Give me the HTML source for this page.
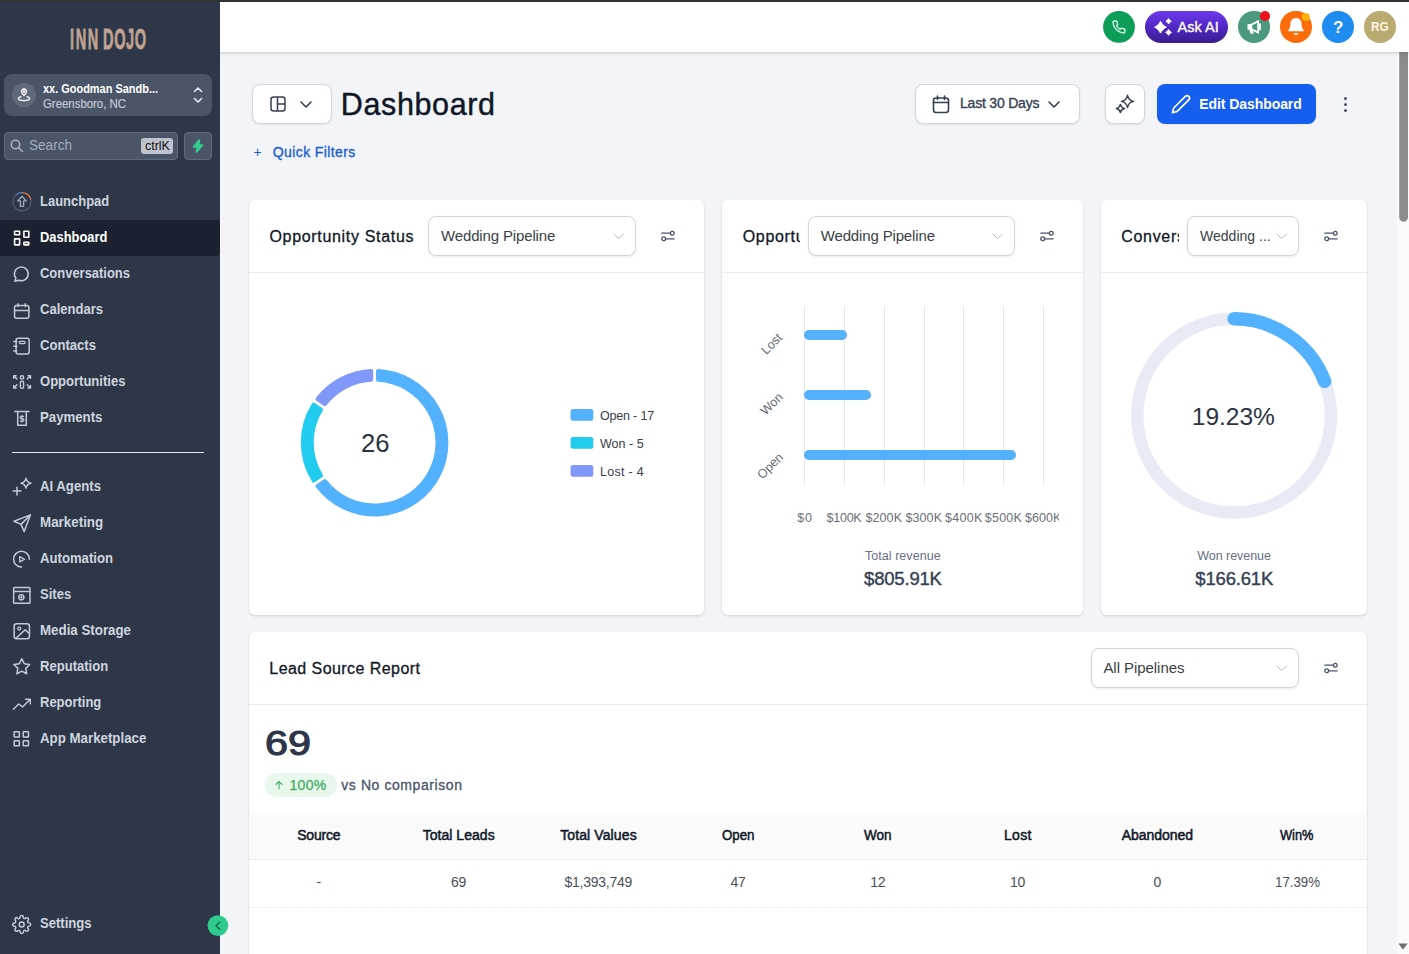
<!DOCTYPE html>
<html lang="en"><head><meta charset="utf-8"><title>Dashboard</title>
<style>
html,body{margin:0;padding:0;width:1409px;height:954px;overflow:hidden}
body{width:1409px;height:954px;overflow:hidden;position:relative;background:#f2f4f7;font-family:"Liberation Sans",sans-serif;}
.b{position:absolute;box-sizing:border-box;display:block}
.t{position:absolute;white-space:pre;margin:0;padding:0}
.card{position:absolute;box-sizing:border-box;background:#fff;border-radius:6px;box-shadow:0 1px 3px rgba(16,24,40,.10),0 1px 2px rgba(16,24,40,.06)}
.sel{position:absolute;box-sizing:border-box;background:#fff;border:1px solid #d2d5da;border-radius:8px;box-shadow:0 1px 2px rgba(16,24,40,.09)}
</style></head><body>
<div id="app" style="position:absolute;left:0;top:0;width:1409px;height:954px;overflow:hidden">
<div class="sel" style="left:252px;top:84px;width:80px;height:40px"></div>
<svg class="b" style="left:270px;top:96px;" width="16" height="16" viewBox="0 0 16 16"><g fill="none" stroke="#344054" stroke-width="1.5" stroke-linejoin="round"><rect x="1" y="1" width="14" height="14" rx="2.500"/><path d="M7.500 1v14M7.500 8h7.500"/></g></svg>
<svg class="b" style="left:300.0px;top:100.5px;" width="12" height="7.0" viewBox="0 0 12 7.0"><path d="M1 1l5.0 5.0l5.0 -5.0" fill="none" stroke="#344054" stroke-width="1.6" stroke-linecap="round" stroke-linejoin="round"/></svg>
<div class="t" style="left:340.80px;top:86px;font-size:30.5px;line-height:37px;color:#101828;letter-spacing:0.623px;-webkit-text-stroke:0.45px #101828;">Dashboard</div>
<div class="t" style="left:253.50px;top:144px;font-size:14px;line-height:17px;color:#175cd3;">+</div>
<div class="t" style="left:272.80px;top:144px;font-size:14px;line-height:17px;color:#175cd3;letter-spacing:0.393px;-webkit-text-stroke:0.3px #175cd3;">Quick Filters</div>
<div class="sel" style="left:915px;top:84px;width:165px;height:40px"></div>
<svg class="b" style="left:931px;top:94px;" width="20" height="20" viewBox="0 0 20 20"><g fill="none" stroke="#344054" stroke-width="1.6" stroke-linecap="round" stroke-linejoin="round"><rect x="2.500" y="4" width="15" height="14.500" rx="2.500"/><path d="M2.500 8.500h15M6.500 2v3.500M13.500 2v3.500"/></g></svg>
<div class="t" style="left:960.00px;top:95px;font-size:14px;line-height:17px;color:#344054;letter-spacing:-0.201px;-webkit-text-stroke:0.35px #344054;">Last 30 Days</div>
<svg class="b" style="left:1048.0px;top:100.5px;" width="12" height="7.0" viewBox="0 0 12 7.0"><path d="M1 1l5.0 5.0l5.0 -5.0" fill="none" stroke="#344054" stroke-width="1.6" stroke-linecap="round" stroke-linejoin="round"/></svg>
<div class="sel" style="left:1105px;top:84px;width:40px;height:40px"></div>
<svg class="b" style="left:1115px;top:94px;overflow:visible;" width="20" height="20" viewBox="0 0 20 20"><g fill="none" stroke="#344054" stroke-width="1.450" stroke-linejoin="round"><path d="M12.5 1.30C13.27 5.20 14.70 6.63 18.60 7.4C14.70 8.17 13.27 9.60 12.5 13.50C11.73 9.60 10.30 8.17 6.40 7.4C10.30 6.63 11.73 5.20 12.5 1.30Z"/><path d="M5.4 10.40C5.92 13.02 6.88 13.98 9.50 14.5C6.88 15.02 5.92 15.98 5.4 18.60C4.88 15.98 3.92 15.02 1.30 14.5C3.92 13.98 4.88 13.02 5.4 10.40Z"/></g></svg>
<div class="b" style="left:1157px;top:84px;width:159px;height:40px;background:#155eef;border-radius:8px;box-shadow:0 1px 2px rgba(16,24,40,.05);"></div>
<svg class="b" style="left:1171px;top:94px;overflow:visible;" width="20" height="20" viewBox="0 0 20 20"><g transform="translate(-0.300 -0.200) scale(0.86)"><path d="M17 3a2.828 2.828 0 1 1 4 4L7.500 20.500 2 22l1.500-5.500L17 3z" fill="none" stroke="#fff" stroke-width="1.950" stroke-linejoin="round"/></g></svg>
<div class="t" style="left:1199.20px;top:96px;font-size:14px;line-height:17px;color:#fff;font-weight:700;letter-spacing:-0.066px;">Edit Dashboard</div>
<div class="b" style="left:1344.3px;top:97.1px;width:3px;height:3px;background:#475467;border-radius:50%;"></div>
<div class="b" style="left:1344.3px;top:102.8px;width:3px;height:3px;background:#475467;border-radius:50%;"></div>
<div class="b" style="left:1344.3px;top:108.5px;width:3px;height:3px;background:#475467;border-radius:50%;"></div>
<div class="card" style="left:249px;top:200px;width:455px;height:415px;"></div>
<div class="b" style="left:249px;top:272px;width:455px;height:1px;background:#eaecf0;"></div>
<div class="t" style="left:269.50px;top:227px;font-size:16px;line-height:19px;color:#101828;letter-spacing:0.675px;-webkit-text-stroke:0.3px #101828;">Opportunity Status</div>
<div class="sel" style="left:428px;top:216px;width:208px;height:40px"></div>
<div class="t" style="left:441.00px;top:227px;font-size:15px;line-height:18px;color:#3a3f47;letter-spacing:-0.145px;">Wedding Pipeline</div>
<svg class="b" style="left:612.8px;top:232.95000000000002px;" width="11.4" height="6.7" viewBox="0 0 11.4 6.7"><path d="M1 1l4.7 4.7l4.7 -4.7" fill="none" stroke="#b4b9c2" stroke-width="1.0" stroke-linecap="round" stroke-linejoin="round"/></svg>
<svg class="b" style="left:660px;top:228.3px;" width="16" height="16" viewBox="0 0 16 16"><g fill="none" stroke="#475467" stroke-width="1.3" stroke-linecap="round"><path d="M1.800 5.200h8.400M5.800 10.800h8.400"/><circle cx="12.300" cy="5.200" r="1.900"/><circle cx="3.700" cy="10.800" r="1.900"/></g></svg>
<svg class="b" style="left:0;top:0" width="1409" height="954" viewBox="0 0 1409 954"><path d="M378.00 370.88A71.80 71.80 0 1 1 317.51 486.14L324.84 481.08A62.90 62.90 0 1 0 378.00 379.79Z" fill="#53b1fd" stroke="#53b1fd" stroke-width="4.0" stroke-linejoin="round"/><path d="M313.65 480.54A71.80 71.80 0 0 1 313.65 404.66L320.98 409.72A62.90 62.90 0 0 0 320.98 475.48Z" fill="#22ccee" stroke="#22ccee" stroke-width="4.0" stroke-linejoin="round"/><path d="M317.51 399.06A71.80 71.80 0 0 1 371.20 370.88L371.20 379.79A62.90 62.90 0 0 0 324.84 404.12Z" fill="#8098f9" stroke="#8098f9" stroke-width="4.0" stroke-linejoin="round"/></svg>
<div class="t" style="left:360.65px;top:427px;font-size:26.5px;line-height:32px;color:#2b3442;transform:scaleX(0.9669);transform-origin:0 50%;">26</div>
<svg class="b" style="left:570px;top:408px;" width="24" height="14" viewBox="0 0 24 14"><rect x="0.600" y="1.100" width="22.700" height="11.700" rx="2.500" fill="#53b1fd"/></svg>
<div class="t" style="left:600.00px;top:409px;font-size:12.5px;line-height:15px;color:#3a404c;letter-spacing:-0.186px;">Open - 17</div>
<svg class="b" style="left:570px;top:436px;" width="24" height="14" viewBox="0 0 24 14"><rect x="0.600" y="1.100" width="22.700" height="11.700" rx="2.500" fill="#22ccee"/></svg>
<div class="t" style="left:600.00px;top:437px;font-size:12.5px;line-height:15px;color:#3a404c;letter-spacing:0.044px;">Won - 5</div>
<svg class="b" style="left:570px;top:464px;" width="24" height="14" viewBox="0 0 24 14"><rect x="0.600" y="1.100" width="22.700" height="11.700" rx="2.500" fill="#8098f9"/></svg>
<div class="t" style="left:600.00px;top:465px;font-size:12.5px;line-height:15px;color:#3a404c;letter-spacing:0.302px;">Lost - 4</div>
<div class="card" style="left:722px;top:200px;width:361px;height:415px;"></div>
<div class="b" style="left:722px;top:272px;width:361px;height:1px;background:#eaecf0;"></div>
<div class="t" style="left:742.7px;top:226px;width:57.5px;overflow:hidden;font-size:16px;line-height:22px;color:#101828;letter-spacing:0.68px;-webkit-text-stroke:0.3px #101828">Opportunity Value</div>
<div class="sel" style="left:808px;top:216px;width:207px;height:40px"></div>
<div class="t" style="left:820.70px;top:227px;font-size:15px;line-height:18px;color:#3a3f47;letter-spacing:-0.145px;">Wedding Pipeline</div>
<svg class="b" style="left:991.8px;top:232.95000000000002px;" width="11.4" height="6.7" viewBox="0 0 11.4 6.7"><path d="M1 1l4.7 4.7l4.7 -4.7" fill="none" stroke="#b4b9c2" stroke-width="1.0" stroke-linecap="round" stroke-linejoin="round"/></svg>
<svg class="b" style="left:1039px;top:228.3px;" width="16" height="16" viewBox="0 0 16 16"><g fill="none" stroke="#475467" stroke-width="1.3" stroke-linecap="round"><path d="M1.800 5.200h8.400M5.800 10.800h8.400"/><circle cx="12.300" cy="5.200" r="1.900"/><circle cx="3.700" cy="10.800" r="1.900"/></g></svg>
<div class="b" style="left:804px;top:306px;width:1px;height:178px;background:#e5e6e9;"></div>
<div class="b" style="left:844px;top:306px;width:1px;height:178px;background:#e5e6e9;"></div>
<div class="b" style="left:884px;top:306px;width:1px;height:178px;background:#e5e6e9;"></div>
<div class="b" style="left:924px;top:306px;width:1px;height:178px;background:#e5e6e9;"></div>
<div class="b" style="left:963px;top:306px;width:1px;height:178px;background:#e5e6e9;"></div>
<div class="b" style="left:1003px;top:306px;width:1px;height:178px;background:#e5e6e9;"></div>
<div class="b" style="left:1043px;top:306px;width:1px;height:178px;background:#e5e6e9;"></div>
<div class="b" style="left:804.3px;top:330.2px;width:42.40000000000009px;height:10px;background:#53b1fd;border-radius:5px;"></div>
<div class="b" style="left:804.3px;top:390px;width:66.70000000000005px;height:10px;background:#53b1fd;border-radius:5px;"></div>
<div class="b" style="left:804.3px;top:449.9px;width:212.0px;height:10px;background:#53b1fd;border-radius:5px;"></div>
<div class="t" style="left:759.7px;top:337px;font-size:12.5px;line-height:14px;color:#666c76;transform:rotate(-45deg);transform-origin:50% 50%">Lost</div>
<div class="t" style="left:758.8px;top:397px;font-size:12.5px;line-height:14px;color:#666c76;transform:rotate(-45deg);transform-origin:50% 50%">Won</div>
<div class="t" style="left:755.2px;top:459px;font-size:12.5px;line-height:14px;color:#666c76;transform:rotate(-45deg);transform-origin:50% 50%">Open</div>
<div class="t" style="left:797.20px;top:511px;font-size:12.5px;line-height:15px;color:#6a6f79;letter-spacing:0.796px;">$0</div>
<div class="t" style="left:826.50px;top:511px;font-size:12.5px;line-height:15px;color:#6a6f79;letter-spacing:-0.237px;">$100K</div>
<div class="t" style="left:865.50px;top:511px;font-size:12.5px;line-height:15px;color:#6a6f79;letter-spacing:0.088px;">$200K</div>
<div class="t" style="left:905.40px;top:511px;font-size:12.5px;line-height:15px;color:#6a6f79;letter-spacing:0.113px;">$300K</div>
<div class="t" style="left:945.00px;top:511px;font-size:12.5px;line-height:15px;color:#6a6f79;letter-spacing:0.288px;">$400K</div>
<div class="t" style="left:984.80px;top:511px;font-size:12.5px;line-height:15px;color:#6a6f79;letter-spacing:0.238px;">$500K</div>
<div class="t" style="left:1025px;top:511px;width:34px;overflow:hidden;font-size:12.5px;line-height:15px;color:#6a6f79;letter-spacing:0.05px">$600K</div>
<div class="t" style="left:865.00px;top:549px;font-size:12.5px;line-height:15px;color:#667085;letter-spacing:0.046px;">Total revenue</div>
<div class="t" style="left:864.10px;top:568px;font-size:18.5px;line-height:22px;color:#344054;letter-spacing:-0.202px;-webkit-text-stroke:0.4px #344054;">$805.91K</div>
<div class="card" style="left:1101px;top:200px;width:266px;height:415px;"></div>
<div class="b" style="left:1101px;top:272px;width:266px;height:1px;background:#eaecf0;"></div>
<div class="t" style="left:1121.3px;top:226px;width:57.5px;overflow:hidden;font-size:16px;line-height:22px;color:#101828;letter-spacing:0.68px;-webkit-text-stroke:0.3px #101828">Conversion Rate</div>
<div class="sel" style="left:1187px;top:216px;width:112px;height:40px"></div>
<div class="t" style="left:1199.70px;top:227px;font-size:15px;line-height:18px;color:#3a3f47;transform:scaleX(0.9352);transform-origin:0 50%;">Wedding ...</div>
<svg class="b" style="left:1276.0px;top:232.95000000000002px;" width="11.4" height="6.7" viewBox="0 0 11.4 6.7"><path d="M1 1l4.7 4.7l4.7 -4.7" fill="none" stroke="#b4b9c2" stroke-width="1.0" stroke-linecap="round" stroke-linejoin="round"/></svg>
<svg class="b" style="left:1323px;top:228.3px;" width="16" height="16" viewBox="0 0 16 16"><g fill="none" stroke="#475467" stroke-width="1.3" stroke-linecap="round"><path d="M1.800 5.200h8.400M5.800 10.800h8.400"/><circle cx="12.300" cy="5.200" r="1.900"/><circle cx="3.700" cy="10.800" r="1.900"/></g></svg>
<svg class="b" style="left:0;top:0" width="1409" height="954" viewBox="0 0 1409 954"><circle cx="1234.1" cy="415.7" r="96.85" fill="none" stroke="#e8ebf5" stroke-width="12.5"/><path d="M1234.1 318.85A96.85 96.85 0 0 1 1324.65 381.35" fill="none" stroke="#53b1fd" stroke-width="13.5" stroke-linecap="round"/></svg>
<div class="t" style="left:1191.80px;top:402px;font-size:24.5px;line-height:29px;color:#2b3442;letter-spacing:-0.019px;">19.23%</div>
<div class="t" style="left:1197.30px;top:549px;font-size:12.5px;line-height:15px;color:#667085;letter-spacing:-0.052px;">Won revenue</div>
<div class="t" style="left:1195.35px;top:568px;font-size:18.5px;line-height:22px;color:#344054;letter-spacing:-0.188px;-webkit-text-stroke:0.4px #344054;">$166.61K</div>
<div class="card" style="left:249px;top:632px;width:1118px;height:322px;border-radius:6px 6px 0 0;"></div>
<div class="b" style="left:249px;top:704px;width:1118px;height:1px;background:#eaecf0;"></div>
<div class="t" style="left:269.30px;top:659px;font-size:16px;line-height:19px;color:#101828;letter-spacing:0.441px;-webkit-text-stroke:0.3px #101828;">Lead Source Report</div>
<div class="sel" style="left:1091px;top:648px;width:208px;height:40px"></div>
<div class="t" style="left:1103.40px;top:659px;font-size:15px;line-height:18px;color:#3a3f47;letter-spacing:-0.051px;">All Pipelines</div>
<svg class="b" style="left:1275.8px;top:664.9499999999999px;" width="11.4" height="6.7" viewBox="0 0 11.4 6.7"><path d="M1 1l4.7 4.7l4.7 -4.7" fill="none" stroke="#b4b9c2" stroke-width="1.0" stroke-linecap="round" stroke-linejoin="round"/></svg>
<svg class="b" style="left:1323px;top:660px;" width="16" height="16" viewBox="0 0 16 16"><g fill="none" stroke="#475467" stroke-width="1.3" stroke-linecap="round"><path d="M1.800 5.200h8.400M5.800 10.800h8.400"/><circle cx="12.300" cy="5.200" r="1.900"/><circle cx="3.700" cy="10.800" r="1.900"/></g></svg>
<div class="t" style="left:265.20px;top:723px;font-size:34.5px;line-height:41px;color:#2d3648;transform:scaleX(1.1987);transform-origin:0 50%;-webkit-text-stroke:1.1px #2d3648;">69</div>
<div class="b" style="left:265px;top:773px;width:72px;height:24px;background:#e8f8ed;border-radius:12px;"></div>
<svg class="b" style="left:273px;top:779px;" width="12" height="12" viewBox="0 0 12 12"><path d="M6 10V2.500M3 5.500l3-3 3 3" fill="none" stroke="#4caf6a" stroke-width="1.1" stroke-linecap="round" stroke-linejoin="round"/></svg>
<div class="t" style="left:289.40px;top:777px;font-size:14px;line-height:17px;color:#3dab5e;letter-spacing:0.364px;-webkit-text-stroke:0.25px #3dab5e;">100%</div>
<div class="t" style="left:341.30px;top:777px;font-size:14px;line-height:17px;color:#475467;letter-spacing:0.577px;-webkit-text-stroke:0.3px #475467;">vs No comparison</div>
<div class="b" style="left:249px;top:813px;width:1118px;height:47px;background:#fafafb;border-bottom:1px solid #eeeff2;"></div>
<div class="b" style="left:249px;top:907px;width:1118px;height:1px;background:#eeeff2;"></div>
<div class="t" style="left:297.15px;top:827px;font-size:14px;line-height:17px;color:#101828;letter-spacing:-0.172px;-webkit-text-stroke:0.5px #101828;">Source</div>
<div class="t" style="left:316.57px;top:874px;font-size:14px;line-height:17px;color:#4a4f59;">-</div>
<div class="t" style="left:422.65px;top:827px;font-size:14px;line-height:17px;color:#101828;letter-spacing:0.039px;-webkit-text-stroke:0.5px #101828;">Total Leads</div>
<div class="t" style="left:450.90px;top:874px;font-size:14px;line-height:17px;color:#4a4f59;letter-spacing:-0.073px;">69</div>
<div class="t" style="left:560.15px;top:827px;font-size:14px;line-height:17px;color:#101828;letter-spacing:0.115px;-webkit-text-stroke:0.5px #101828;">Total Values</div>
<div class="t" style="left:564.40px;top:874px;font-size:14px;line-height:17px;color:#4a4f59;letter-spacing:-0.230px;">$1,393,749</div>
<div class="t" style="left:721.90px;top:827px;font-size:14px;line-height:17px;color:#101828;transform:scaleX(0.9489);transform-origin:0 50%;-webkit-text-stroke:0.5px #101828;">Open</div>
<div class="t" style="left:730.40px;top:874px;font-size:14px;line-height:17px;color:#4a4f59;letter-spacing:-0.073px;">47</div>
<div class="t" style="left:864.15px;top:827px;font-size:14px;line-height:17px;color:#101828;transform:scaleX(0.9638);transform-origin:0 50%;-webkit-text-stroke:0.5px #101828;">Won</div>
<div class="t" style="left:870.15px;top:874px;font-size:14px;line-height:17px;color:#4a4f59;letter-spacing:-0.073px;">12</div>
<div class="t" style="left:1003.90px;top:827px;font-size:14px;line-height:17px;color:#101828;letter-spacing:0.346px;-webkit-text-stroke:0.5px #101828;">Lost</div>
<div class="t" style="left:1009.90px;top:874px;font-size:14px;line-height:17px;color:#4a4f59;letter-spacing:-0.073px;">10</div>
<div class="t" style="left:1121.65px;top:827px;font-size:14px;line-height:17px;color:#101828;letter-spacing:-0.016px;-webkit-text-stroke:0.5px #101828;">Abandoned</div>
<div class="t" style="left:1153.51px;top:874px;font-size:14px;line-height:17px;color:#4a4f59;">0</div>
<div class="t" style="left:1280.40px;top:827px;font-size:14px;line-height:17px;color:#101828;transform:scaleX(0.9163);transform-origin:0 50%;-webkit-text-stroke:0.5px #101828;">Win%</div>
<div class="t" style="left:1274.65px;top:874px;font-size:14px;line-height:17px;color:#4a4f59;transform:scaleX(0.9477);transform-origin:0 50%;">17.39%</div>
<div class="b" style="left:1397px;top:52px;width:12px;height:902px;background:#fafafa;"></div>
<svg class="b" style="left:1397px;top:52px;" width="12" height="902" viewBox="0 0 12 902"><path d="M2.200 0h8.800v165.300a4.400 4.400 0 0 1-8.800 0z" fill="#8b8b8b"/><path d="M1.300 891.500h9.400L6 897.500z" fill="#6e6e6e"/></svg>
<div class="b" style="left:220px;top:0px;width:1189px;height:52px;background:#fff;box-shadow:0 1px 3px rgba(0,0,0,.12),0 2px 4px rgba(0,0,0,.06);"></div>
<div class="b" style="left:0px;top:0px;width:1409px;height:2px;background:#333;z-index:5;"></div>
<svg class="b" style="left:1103px;top:11px;" width="32" height="32" viewBox="0 0 32 32"><circle cx="16" cy="15.900" r="15.900" fill="#0d9d58"/><g transform="translate(8.700 8.800) scale(0.6)"><path d="M22 16.920v3a2 2 0 0 1-2.180 2 19.790 19.790 0 0 1-8.630-3.070 19.500 19.500 0 0 1-6-6 19.790 19.790 0 0 1-3.070-8.670A2 2 0 0 1 4.110 2h3a2 2 0 0 1 2 1.720 12.840 12.840 0 0 0 .7 2.810 2 2 0 0 1-.45 2.110L8.090 9.910a16 16 0 0 0 6 6l1.270-1.270a2 2 0 0 1 2.110-.45 12.840 12.840 0 0 0 2.810.7A2 2 0 0 1 22 16.920z" fill="none" stroke="#d4f7e4" stroke-width="2.300" stroke-linejoin="round"/></g></svg>
<div class="b" style="left:1145px;top:11px;width:83px;height:32px;background:linear-gradient(180deg,#6d3aec 0%,#5429c8 45%,#3a1b90 100%);border-radius:16px;"></div>
<svg class="b" style="left:1150px;top:14px;" width="24" height="26" viewBox="0 0 24 26"><path d="M10.5 7.299999999999999C11.53 9.78 13.92 12.17 16.4 13.2C13.92 14.23 11.53 16.62 10.5 19.1C9.47 16.62 7.08 14.23 4.6 13.2C7.08 12.17 9.47 9.78 10.5 7.299999999999999ZM18.6 4.6C19.07 5.73 20.17 6.83 21.3 7.3C20.17 7.77 19.07 8.87 18.6 10.0C18.13 8.87 17.03 7.77 15.900000000000002 7.3C17.03 6.83 18.13 5.73 18.6 4.6ZM18.6 15.499999999999998C19.10 16.72 20.28 17.90 21.5 18.4C20.28 18.90 19.10 20.08 18.6 21.299999999999997C18.10 20.08 16.92 18.90 15.700000000000001 18.4C16.92 17.90 18.10 16.72 18.6 15.499999999999998Z" fill="#fff" stroke="#fff" stroke-width="1" stroke-linejoin="round"/></svg>
<div class="t" style="left:1177.60px;top:19px;font-size:14.5px;line-height:17px;color:#fff;letter-spacing:0.020px;-webkit-text-stroke:0.35px #fff;">Ask AI</div>
<svg class="b" style="left:1238px;top:11px;" width="32" height="32" viewBox="0 0 32 32"><circle cx="16" cy="15.900" r="16" fill="#4b9a80"/><g fill="#fff"><path d="M9.500 13h3.200l8.300-4.200v14.200l-8.300-4.200H9.500z"/><path d="M11.200 18h3.600l.8 4.800h-3.200z"/></g><path d="M14.200 14.300 19.300 11.700v8.400l-5.100-2.600z" fill="#4b9a80"/><path d="M22 13.200v5.400" stroke="#fff" stroke-width="1.800" stroke-linecap="round"/></svg>
<svg class="b" style="left:1259px;top:10px;" width="12" height="12" viewBox="0 0 12 12"><circle cx="6" cy="6" r="5.100" fill="#f0101a"/></svg>
<svg class="b" style="left:1280px;top:11px;" width="32" height="32" viewBox="0 0 32 32"><circle cx="16" cy="15.900" r="16" fill="#fd6c0a"/><path d="M16 7c-3.400 0-5.600 2.500-5.600 5.700 0 3.800-1 5.500-2.300 6.700-.3.300-.1.800.3.800h15.200c.4 0 .6-.5.300-.8-1.300-1.200-2.300-2.900-2.300-6.700C21.600 9.500 19.400 7 16 7z" fill="#fff"/><path d="M13.800 22.300h4.400c-.2 1.200-1.100 2-2.200 2s-2-.8-2.200-2z" fill="#fff"/></svg>
<svg class="b" style="left:1301px;top:12px;" width="10" height="10" viewBox="0 0 10 10"><circle cx="4.800" cy="5.100" r="4" fill="#ffb20a"/></svg>
<svg class="b" style="left:1322px;top:11px;" width="32" height="32" viewBox="0 0 32 32"><circle cx="16" cy="15.900" r="16" fill="#1e8cf0"/></svg>
<div class="t" style="left:1333.11px;top:18px;font-size:17px;line-height:20px;color:#fff;font-weight:700;">?</div>
<svg class="b" style="left:1364px;top:11px;" width="32" height="32" viewBox="0 0 32 32"><circle cx="16" cy="15.900" r="16" fill="#b9aa72"/></svg>
<div class="t" style="left:1371.30px;top:19px;font-size:13.5px;line-height:16px;color:#fff6e2;font-weight:700;transform:scaleX(0.8691);transform-origin:0 50%;">RG</div>
<div class="b" style="left:0px;top:0px;width:220px;height:954px;background:#2d3748;"></div>
<div class="t" style="left:70px;top:24px;height:30px;line-height:30px;font-size:30px;font-weight:700;color:#bfa292;-webkit-text-stroke:0.8px #bfa292;transform-origin:0 50%;transform:scaleX(0.485);white-space:pre;word-spacing:-2px"><span style="letter-spacing:3.4px">INN</span> <span style="letter-spacing:1.2px">DOJO</span></div>
<div class="b" style="left:4px;top:74px;width:208px;height:42px;background:#4a5568;border-radius:8px;"></div>
<div class="b" style="left:12px;top:83px;width:24px;height:24px;background:#5f6b7d;border-radius:50%;"></div>
<svg class="b" style="left:16px;top:87px;" width="16" height="16" viewBox="0 0 16 16"><g fill="none" stroke="#fff" stroke-width="1.3" stroke-linecap="round" stroke-linejoin="round"><path d="M8 8.6c1.5-1.5 2.6-2.6 2.6-4A2.6 2.6 0 0 0 5.4 4.6c0 1.4 1.1 2.5 2.6 4z"/><circle cx="8" cy="4.6" r="0.8"/><path d="M5 9.6c-1.5.4-2.6 1.1-2.6 1.9 0 1.2 2.5 2.1 5.6 2.1s5.6-.9 5.6-2.1c0-.8-1.1-1.500-2.600-1.900"/></g></svg>
<div class="t" style="left:43.00px;top:82px;font-size:12px;line-height:14px;color:#ffffff;font-weight:700;transform:scaleX(0.9126);transform-origin:0 50%;">xx. Goodman Sandb...</div>
<div class="t" style="left:43.00px;top:97px;font-size:12px;line-height:14px;color:#c0c7d2;transform:scaleX(0.9500);transform-origin:0 50%;-webkit-text-stroke:0.2px #c0c7d2;">Greensboro, NC</div>
<svg class="b" style="left:192px;top:85px;" width="12" height="20" viewBox="0 0 12 20"><g fill="none" stroke="#e2e8f0" stroke-width="1.6" stroke-linecap="round" stroke-linejoin="round"><path d="M2.500 6.500 6 3l3.500 3.500"/><path d="M2.500 13.500 6 17l3.500-3.500"/></g></svg>
<div class="b" style="left:4px;top:132px;width:174px;height:28px;background:#4a5568;border:1px solid #5f6a7c;border-radius:4px;"></div>
<svg class="b" style="left:9px;top:138px;" width="16" height="16" viewBox="0 0 16 16"><g fill="none" stroke="#aab3c1" stroke-width="1.5" stroke-linecap="round"><circle cx="6.500" cy="6.500" r="4.200"/><path d="M9.800 9.800 13.500 13.500"/></g></svg>
<div class="t" style="left:29.00px;top:137px;font-size:14px;line-height:17px;color:#a0aec0;transform:scaleX(0.9693);transform-origin:0 50%;">Search</div>
<div class="b" style="left:141px;top:138px;width:32px;height:16px;background:#bfc4cc;border-radius:3px;"></div>
<div class="t" style="left:144.70px;top:138px;font-size:13.5px;line-height:16px;color:#111;transform:scaleX(0.9185);transform-origin:0 50%;">ctrlK</div>
<div class="b" style="left:184px;top:132px;width:28px;height:28px;background:#4a5568;border:1px solid #5f6a7c;border-radius:4px;"></div>
<svg class="b" style="left:191px;top:139px;" width="14" height="14" viewBox="0 0 14 14"><path d="M8.400 1.200 2.600 7.900h3.900L5.600 12.800 11.400 6.100H7.500z" fill="#37ca8f" stroke="#37ca8f" stroke-width="1.900" stroke-linejoin="round"/></svg>
<div class="b" style="left:0px;top:220px;width:220px;height:36px;background:#1b212e;border-radius:0 4px 4px 0;"></div>
<div class="b" style="left:12px;top:452px;width:192px;height:1px;background:#e2e8f0;"></div>
<svg class="b" style="left:12px;top:192px;overflow:visible;" width="22" height="22" viewBox="0 0 22 22"><g fill="none" stroke="#c3cad6" stroke-width="1.5" stroke-linecap="round" stroke-linejoin="round"><circle cx="9.900" cy="9.800" r="9.100" stroke="#4d5b72" stroke-width="1.2"/><path d="M9.900 0.700A9.100 9.100 0 0 1 18.600 7.100" stroke="#e8743b" stroke-width="1.3"/><path d="M9.900 0.700A9.100 9.100 0 0 0 4 2.900" stroke="#5b77b8" stroke-width="1.3"/><path d="M10 4.300 5.800 8.900h2.600v5.500h3.200V8.900h2.600z" stroke="#9aa5b6" stroke-width="1.4"/></g></svg>
<div class="t" style="left:40.00px;top:193px;font-size:14px;line-height:17px;color:#cfd5df;font-weight:700;transform:scaleX(0.9267);transform-origin:0 50%;">Launchpad</div>
<svg class="b" style="left:12px;top:228px;overflow:visible;" width="22" height="22" viewBox="0 0 22 22"><g fill="none" stroke="#ffffff" stroke-width="1.6" stroke-linecap="round" stroke-linejoin="round"><rect stroke-linejoin="miter" x="2.600" y="3.300" width="5" height="3.500" rx="0.300"/><rect stroke-linejoin="miter" x="2.600" y="10.900" width="5" height="6" rx="0.300"/><rect stroke-linejoin="miter" x="11.900" y="3.300" width="4.900" height="6" rx="0.300"/><rect stroke-linejoin="miter" x="11.900" y="14.400" width="4.900" height="2.500" rx="0.300"/></g></svg>
<div class="t" style="left:40.00px;top:229px;font-size:14px;line-height:17px;color:#ffffff;font-weight:700;transform:scaleX(0.9203);transform-origin:0 50%;">Dashboard</div>
<svg class="b" style="left:12px;top:264px;overflow:visible;" width="22" height="22" viewBox="0 0 22 22"><g fill="none" stroke="#c3cad6" stroke-width="1.5" stroke-linecap="round" stroke-linejoin="round"><path d="M3.900 14.200A6.900 6.900 0 1 1 6.700 16.300L2.900 17.300z"/></g></svg>
<div class="t" style="left:40.00px;top:265px;font-size:14px;line-height:17px;color:#cfd5df;font-weight:700;transform:scaleX(0.9254);transform-origin:0 50%;">Conversations</div>
<svg class="b" style="left:12px;top:300px;overflow:visible;" width="22" height="22" viewBox="0 0 22 22"><g fill="none" stroke="#c3cad6" stroke-width="1.5" stroke-linecap="round" stroke-linejoin="round"><rect x="2.550" y="5.600" width="14.300" height="12.750" rx="2"/><path d="M2.550 10.500h14.300M6.100 3.700v2.900M13.300 3.700v2.900"/></g></svg>
<div class="t" style="left:40.00px;top:301px;font-size:14px;line-height:17px;color:#cfd5df;font-weight:700;transform:scaleX(0.9306);transform-origin:0 50%;">Calendars</div>
<svg class="b" style="left:12px;top:336px;overflow:visible;" width="22" height="22" viewBox="0 0 22 22"><g fill="none" stroke="#c3cad6" stroke-width="1.5" stroke-linecap="round" stroke-linejoin="round"><rect x="4.100" y="2.250" width="13.050" height="15.800" rx="2"/><rect x="7.300" y="5.300" width="5.900" height="2.300" rx="1.100" stroke-width="1.300"/><path d="M1.800 5.600h3M1.800 10.300h3M1.800 15h3"/></g></svg>
<div class="t" style="left:40.00px;top:337px;font-size:14px;line-height:17px;color:#cfd5df;font-weight:700;transform:scaleX(0.9349);transform-origin:0 50%;">Contacts</div>
<svg class="b" style="left:12px;top:372px;overflow:visible;" width="22" height="22" viewBox="0 0 22 22"><g fill="none" stroke="#c3cad6" stroke-width="1.5" stroke-linecap="round" stroke-linejoin="round"><circle cx="10" cy="5.400" r="1.700" stroke-width="1.400"/><rect x="8.400" y="9.200" width="3.200" height="7.200" rx="1.400" stroke-width="1.400"/><path d="M1.700 6.200V3.700h2.500M1.900 3.900 5 7M18.500 6.200V3.700H16M18.300 3.900 15.200 7M1.700 13.500V16h2.500M1.900 15.800 5 12.700M18.500 13.500V16H16M18.300 15.800 15.200 12.700" stroke-width="1.400"/></g></svg>
<div class="t" style="left:40.00px;top:373px;font-size:14px;line-height:17px;color:#cfd5df;font-weight:700;transform:scaleX(0.9305);transform-origin:0 50%;">Opportunities</div>
<svg class="b" style="left:12px;top:408px;overflow:visible;" width="22" height="22" viewBox="0 0 22 22"><g fill="none" stroke="#c3cad6" stroke-width="1.5" stroke-linecap="round" stroke-linejoin="round"><path d="M2.700 3.500h14.400M5.700 3.500v13.750h8.600V3.500"/><path d="M11.500 8.300H9.300a1.200 1.200 0 0 0 0 2.400h1.400a1.200 1.200 0 0 1 0 2.400H8.300M10 7.300v6.800" stroke-width="1.200"/></g></svg>
<div class="t" style="left:40.00px;top:409px;font-size:14px;line-height:17px;color:#cfd5df;font-weight:700;transform:scaleX(0.9434);transform-origin:0 50%;">Payments</div>
<svg class="b" style="left:12px;top:477px;overflow:visible;" width="22" height="22" viewBox="0 0 22 22"><g fill="none" stroke="#c3cad6" stroke-width="1.5" stroke-linecap="round" stroke-linejoin="round"><path d="M14 1.200c.6 3.300 1.700 4.400 5 5-3.300.6-4.400 1.700-5 5-.6-3.300-1.700-4.400-5-5 3.300-.6 4.400-1.700 5-5z" stroke-width="1.400"/><path d="M5 10.300v7.600M1.100 14.100h7.800"/></g></svg>
<div class="t" style="left:40.00px;top:478px;font-size:14px;line-height:17px;color:#cfd5df;font-weight:700;transform:scaleX(0.9411);transform-origin:0 50%;">AI Agents</div>
<svg class="b" style="left:12px;top:513px;overflow:visible;" width="22" height="22" viewBox="0 0 22 22"><g fill="none" stroke="#c3cad6" stroke-width="1.5" stroke-linecap="round" stroke-linejoin="round"><path d="M18.400 1.900 2 8.300l7 3.100 3.200 7.200z M18.400 1.900 9 11.400"/></g></svg>
<div class="t" style="left:40.00px;top:514px;font-size:14px;line-height:17px;color:#cfd5df;font-weight:700;transform:scaleX(0.9558);transform-origin:0 50%;">Marketing</div>
<svg class="b" style="left:12px;top:549px;overflow:visible;" width="22" height="22" viewBox="0 0 22 22"><g fill="none" stroke="#c3cad6" stroke-width="1.5" stroke-linecap="round" stroke-linejoin="round"><path d="M17.400 10.200A7.900 7.900 0 1 0 9.500 18.100"/><path d="M7.800 7.600v5.300l4.800-2.650z" stroke-width="1.300"/></g></svg>
<div class="t" style="left:40.00px;top:550px;font-size:14px;line-height:17px;color:#cfd5df;font-weight:700;transform:scaleX(0.9387);transform-origin:0 50%;">Automation</div>
<svg class="b" style="left:12px;top:585px;overflow:visible;" width="22" height="22" viewBox="0 0 22 22"><g fill="none" stroke="#c3cad6" stroke-width="1.5" stroke-linecap="round" stroke-linejoin="round"><rect x="1.650" y="2.500" width="16.300" height="15.800" rx="0.800"/><path d="M1.650 6.500h16.300"/><circle cx="9.300" cy="12.300" r="2.700" stroke-width="1.200"/><path d="M6.600 12.300h5.400M9.300 9.600v5.400" stroke-width="1"/></g></svg>
<div class="t" style="left:40.00px;top:586px;font-size:14px;line-height:17px;color:#cfd5df;font-weight:700;transform:scaleX(0.9354);transform-origin:0 50%;">Sites</div>
<svg class="b" style="left:12px;top:621px;overflow:visible;" width="22" height="22" viewBox="0 0 22 22"><g fill="none" stroke="#c3cad6" stroke-width="1.5" stroke-linecap="round" stroke-linejoin="round"><rect x="2.150" y="2.650" width="15.300" height="15" rx="2.500"/><circle cx="7.200" cy="7.600" r="1.500" stroke-width="1.300"/><path d="M4 17.200 13.200 8.700l4.200 4"/></g></svg>
<div class="t" style="left:40.00px;top:622px;font-size:14px;line-height:17px;color:#cfd5df;font-weight:700;transform:scaleX(0.9510);transform-origin:0 50%;">Media Storage</div>
<svg class="b" style="left:12px;top:657px;overflow:visible;" width="22" height="22" viewBox="0 0 22 22"><g fill="none" stroke="#c3cad6" stroke-width="1.5" stroke-linecap="round" stroke-linejoin="round"><path d="M9.800 1.750l2.450 4.950 5.450.8-3.950 3.850.93 5.430L9.800 14.200l-4.880 2.580.93-5.430L1.900 7.500l5.450-.8z"/></g></svg>
<div class="t" style="left:40.00px;top:658px;font-size:14px;line-height:17px;color:#cfd5df;font-weight:700;transform:scaleX(0.9329);transform-origin:0 50%;">Reputation</div>
<svg class="b" style="left:12px;top:693px;overflow:visible;" width="22" height="22" viewBox="0 0 22 22"><g fill="none" stroke="#c3cad6" stroke-width="1.5" stroke-linecap="round" stroke-linejoin="round"><path d="M1.400 16.200 6.600 11l3.900 2.900 7.700-7.700M13.600 6.200h4.700v4.700" stroke-width="1.400"/></g></svg>
<div class="t" style="left:40.00px;top:694px;font-size:14px;line-height:17px;color:#cfd5df;font-weight:700;transform:scaleX(0.9273);transform-origin:0 50%;">Reporting</div>
<svg class="b" style="left:12px;top:729px;overflow:visible;" width="22" height="22" viewBox="0 0 22 22"><g fill="none" stroke="#c3cad6" stroke-width="1.5" stroke-linecap="round" stroke-linejoin="round"><rect x="2.150" y="2.750" width="5.200" height="5.200" rx="0.500"/><rect x="11.250" y="2.750" width="5.200" height="5.200" rx="0.500"/><rect x="2.150" y="11.650" width="5.200" height="5.200" rx="0.500"/><rect x="11.250" y="11.650" width="5.200" height="5.200" rx="0.500"/></g></svg>
<div class="t" style="left:40.00px;top:730px;font-size:14px;line-height:17px;color:#cfd5df;font-weight:700;transform:scaleX(0.9488);transform-origin:0 50%;">App Marketplace</div>
<svg class="b" style="left:12px;top:914px;overflow:visible;" width="22" height="22" viewBox="0 0 22 22"><g fill="none" stroke="#c3cad6" stroke-width="1.5" stroke-linecap="round" stroke-linejoin="round"><g transform="translate(-0.100 0.700) scale(0.8166)"><circle cx="12" cy="12" r="3" stroke-width="1.800"/><path stroke-width="1.800" d="M19.400 15a1.650 1.650 0 0 0 .33 1.820l.06.06a2 2 0 1 1-2.830 2.830l-.06-.06a1.650 1.650 0 0 0-1.820-.33 1.650 1.650 0 0 0-1 1.510V21a2 2 0 1 1-4 0v-.09A1.650 1.650 0 0 0 9 19.400a1.650 1.650 0 0 0-1.820.33l-.06.06a2 2 0 1 1-2.830-2.830l.06-.06a1.650 1.650 0 0 0 .33-1.820 1.650 1.650 0 0 0-1.510-1H3a2 2 0 1 1 0-4h.09A1.650 1.650 0 0 0 4.600 9a1.650 1.650 0 0 0-.33-1.820l-.06-.06a2 2 0 1 1 2.830-2.830l.06.06a1.650 1.650 0 0 0 1.820.33H9a1.650 1.650 0 0 0 1-1.510V3a2 2 0 1 1 4 0v.09a1.650 1.650 0 0 0 1 1.510 1.650 1.650 0 0 0 1.820-.33l.06-.06a2 2 0 1 1 2.830 2.830l-.06.06a1.650 1.650 0 0 0-.33 1.820V9a1.650 1.650 0 0 0 1.510 1H21a2 2 0 1 1 0 4h-.09a1.650 1.650 0 0 0-1.510 1z"/></g></g></svg>
<div class="t" style="left:40.00px;top:915px;font-size:14px;line-height:17px;color:#cfd5df;font-weight:700;transform:scaleX(0.9343);transform-origin:0 50%;">Settings</div>
<svg class="b" style="left:206px;top:914px;" width="24" height="24" viewBox="0 0 24 24"><circle cx="11.900" cy="11.600" r="10.400" fill="#2fcb8e"/><path d="M13.700 8.200 10 11.700l3.700 3.500" fill="none" stroke="#176b4b" stroke-width="1.500" stroke-linecap="round" stroke-linejoin="round"/></svg>
</div>
</body></html>
